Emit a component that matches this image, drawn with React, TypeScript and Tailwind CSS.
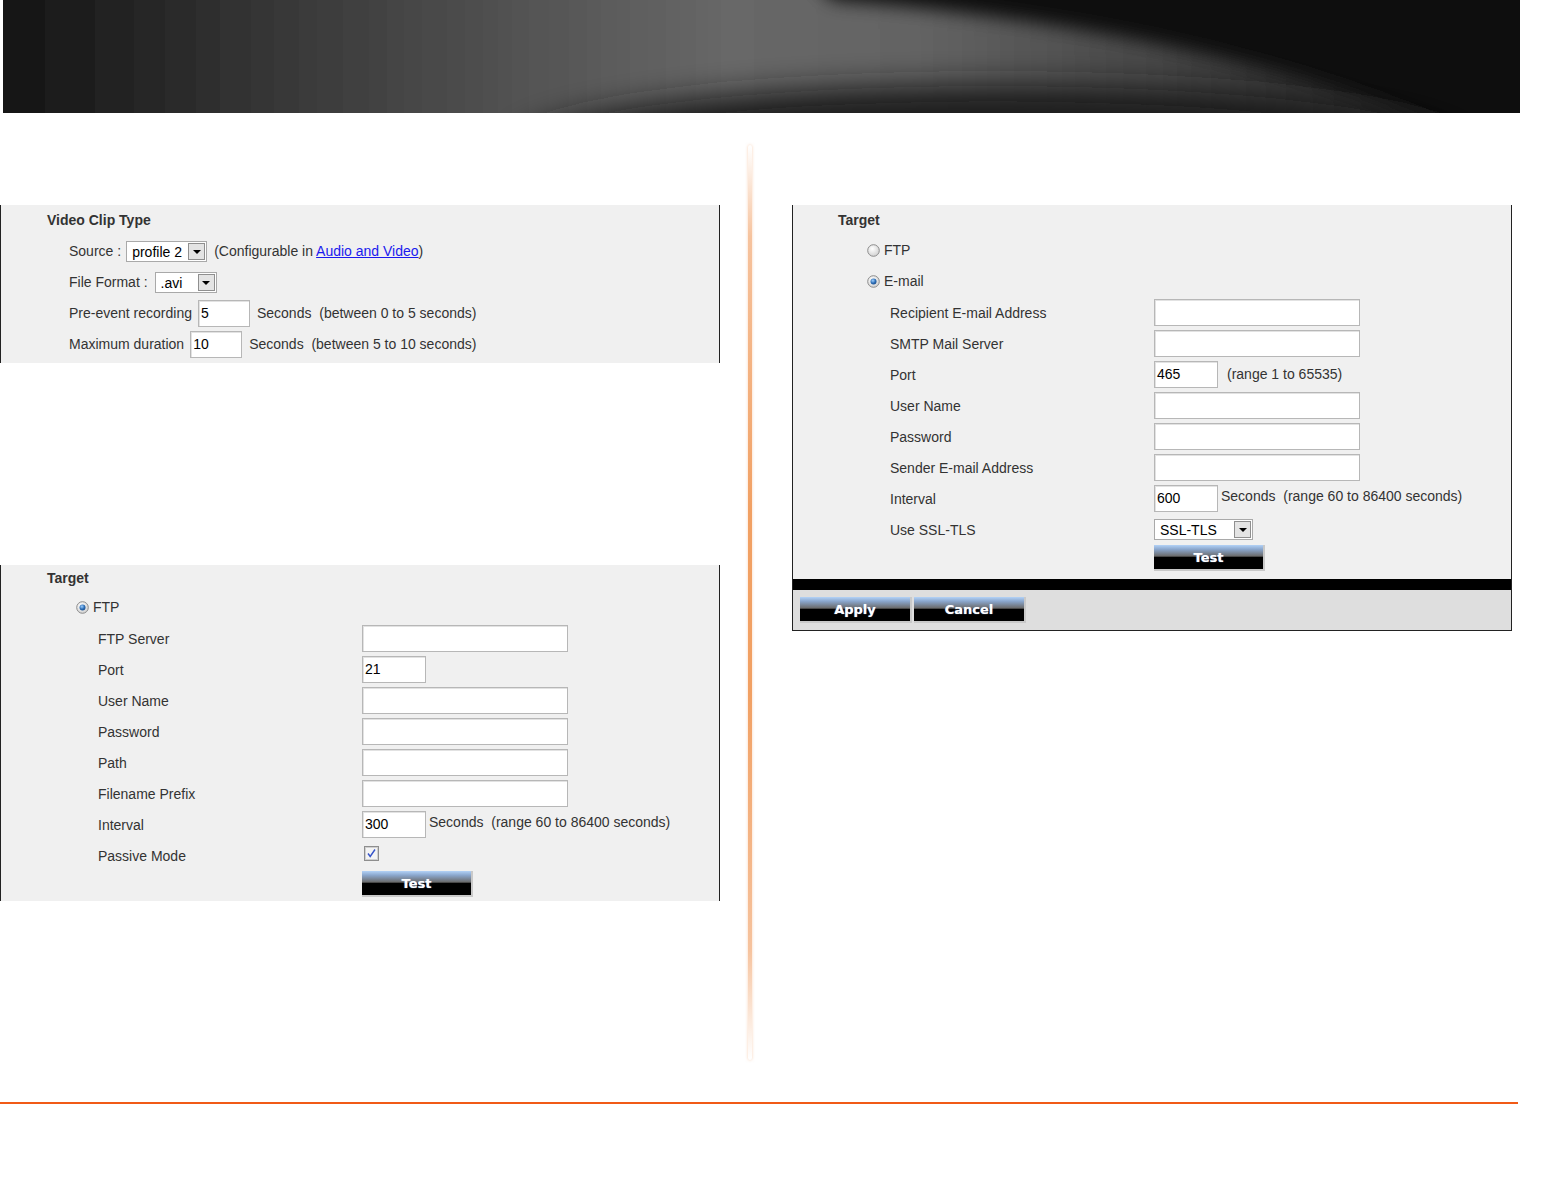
import React from "react";

const F = "font-['Liberation_Sans',Arial,Helvetica,sans-serif]";

function Box({ w, value }: { w: string; value?: string }) {
  return (
    <div
      className={`${w} h-[27px] bg-white border border-[#b7b7b7] shadow-[inset_1px_1px_0_#e2e2e2] text-[14px] text-black leading-[25px] pl-[2px]`}
    >
      {value}
    </div>
  );
}

function Select({ w, value, cls = "" }: { w: string; value: string; cls?: string }) {
  return (
    <div className={`${w} h-[21px] bg-white border border-[#a9a9a9] flex items-center justify-between ${cls}`}>
      <span className="pl-[5px] text-[14px] text-black leading-none">{value}</span>
      <div className="w-[17px] h-[17px] mr-[1px] bg-[#e4e4e4] border border-[#8f8f8f] flex items-center justify-center">
        <div className="w-0 h-0 border-l-[4px] border-r-[4px] border-t-[4px] border-l-transparent border-r-transparent border-t-black mt-[1px]" />
      </div>
    </div>
  );
}

function Btn({ label, w }: { label: string; w: string }) {
  return (
    <div
      className={`${w} h-[26px] flex items-center justify-center pt-[2px] text-white font-bold text-[13px] font-['DejaVu_Sans',Verdana,sans-serif] bg-[linear-gradient(to_bottom,#b3d2f7_0%,#8aa6cc_18%,#6b6b6b_46%,#000_52%,#000_100%)] border-r-2 border-b-2 border-[#c9c9c9] [text-shadow:0_0_1px_#9bb8e8]`}
    >
      {label}
    </div>
  );
}

function Radio({ on }: { on: boolean }) {
  return (
    <svg width="13" height="13" viewBox="0 0 13 13" className="block">
      <defs>
        <radialGradient id={on ? "rgOn" : "rgOff"} cx="0.4" cy="0.35" r="0.7">
          <stop offset="0" stopColor="#ffffff" />
          <stop offset="1" stopColor="#cfcfcf" />
        </radialGradient>
        <radialGradient id="dot" cx="0.4" cy="0.35" r="0.7">
          <stop offset="0" stopColor="#9fd0ff" />
          <stop offset="0.6" stopColor="#2c6db5" />
          <stop offset="1" stopColor="#1a4c8a" />
        </radialGradient>
      </defs>
      <circle cx="6.5" cy="6.5" r="5.8" fill={on ? "url(#rgOn)" : "url(#rgOff)"} stroke="#8c8c8c" strokeWidth="1" />
      {on && <circle cx="6.5" cy="6.5" r="3" fill="url(#dot)" />}
    </svg>
  );
}

function Check() {
  return (
    <svg width="15" height="15" viewBox="0 0 15 15" className="block">
      <rect x="0.5" y="0.5" width="14" height="14" fill="#e9e9e9" stroke="#8e8e8e" />
      <rect x="1.5" y="1.5" width="12" height="12" fill="#f4f4f4" stroke="#d0d0d0" />
      <path d="M4 7.5 L6.2 10.5 L11 3.5" fill="none" stroke="#3553c9" strokeWidth="1.4" />
    </svg>
  );
}

function Row({ label, children }: { label: string; children: React.ReactNode }) {
  return (
    <div className="h-[31px] flex items-center">
      <div className="w-[361px] pl-[97px] pt-[2px] shrink-0">{label}</div>
      <div className="flex items-center">{children}</div>
    </div>
  );
}

function Header() {
  return (
    <svg width="1517" height="113" viewBox="0 0 1517 113" className="block">
      <defs>
        <filter id="b1" x="-20%" y="-80%" width="140%" height="260%">
          <feGaussianBlur stdDeviation="9" />
        </filter>
        <filter id="b2" x="-30%" y="-100%" width="160%" height="300%">
          <feGaussianBlur stdDeviation="16" />
        </filter>
        <linearGradient id="lg" x1="0" x2="1" y1="0" y2="0">
          <stop offset="0" stopColor="#0e0e0e" />
          <stop offset="0.08" stopColor="#1c1c1c" />
          <stop offset="0.22" stopColor="#383838" />
          <stop offset="0.36" stopColor="#515151" />
          <stop offset="0.5" stopColor="#676767" />
          <stop offset="0.62" stopColor="#646464" />
          <stop offset="0.78" stopColor="#464646" />
          <stop offset="0.92" stopColor="#262626" />
          <stop offset="1" stopColor="#161616" />
        </linearGradient>
      </defs>
      <rect width="1517" height="113" fill="#0e0e0e" />
      <path d="M -60 -40 L 790 -40 L 830 0 Q 1230 30 1500 150 L -60 150 Z" fill="url(#lg)" filter="url(#b1)" />
      <ellipse cx="990" cy="152" rx="480" ry="66" fill="#1c1c1c" filter="url(#b2)" />
    </svg>
  );
}

export default function App() {
  return (
    <div className={`w-[1548px] h-[1200px] bg-white ${F} text-[14px] text-[#333]`}>
      <div className="ml-[3px]">
        <Header />
      </div>
      <div className="flex h-[947px]">
        {/* left column */}
        <div className="w-[720px] pt-[92px] flex flex-col gap-[202px]">
          <div className="w-[720px] bg-[#f0f0f0] border-l border-r border-[#222] pb-[3px]">
            <div className="h-[31px] flex items-center pl-[46px] font-bold">Video Clip Type</div>
            <div className="h-[31px] flex items-center pl-[68px]">
              <span>Source :</span>
              <Select w="w-[81px]" value="profile 2" cls="ml-[5px]" />
              <span className="ml-[7px]">
                (Configurable in <span className="text-[#1a1aee] underline">Audio and Video</span>)
              </span>
            </div>
            <div className="h-[31px] flex items-center pl-[68px]">
              <span>File Format :</span>
              <Select w="w-[62px]" value=".avi" cls="ml-[7px]" />
            </div>
            <div className="h-[31px] flex items-center pl-[68px]">
              <span>Pre-event recording</span>
              <div className="ml-[6px]">
                <Box w="w-[52px]" value="5" />
              </div>
              <span className="ml-[7px] whitespace-pre">Seconds  (between 0 to 5 seconds)</span>
            </div>
            <div className="h-[31px] flex items-center pl-[68px]">
              <span>Maximum duration</span>
              <div className="ml-[6px]">
                <Box w="w-[52px]" value="10" />
              </div>
              <span className="ml-[7px] whitespace-pre">Seconds  (between 5 to 10 seconds)</span>
            </div>
          </div>

          <div className="w-[720px] bg-[#f0f0f0] border-l border-r border-[#222] pb-[4px]">
            <div className="h-[26px] flex items-center pl-[46px] font-bold">Target</div>
            <div className="h-[32px] flex items-center pl-[75px] gap-[4px]">
              <Radio on />
              <span>FTP</span>
            </div>
            <Row label="FTP Server">
              <Box w="w-[206px]" />
            </Row>
            <Row label="Port">
              <Box w="w-[64px]" value="21" />
            </Row>
            <Row label="User Name">
              <Box w="w-[206px]" />
            </Row>
            <Row label="Password">
              <Box w="w-[206px]" />
            </Row>
            <Row label="Path">
              <Box w="w-[206px]" />
            </Row>
            <Row label="Filename Prefix">
              <Box w="w-[206px]" />
            </Row>
            <Row label="Interval">
              <Box w="w-[64px]" value="300" />
              <span className="ml-[3px] mb-[4px] whitespace-pre">Seconds  (range 60 to 86400 seconds)</span>
            </Row>
            <Row label="Passive Mode">
              <div className="ml-[2px] mb-[4px]">
                <Check />
              </div>
            </Row>
            <div className="pl-[361px]">
              <Btn label="Test" w="w-[111px]" />
            </div>
          </div>
        </div>

        {/* divider */}
        <div className="w-[72px] pl-[28px]">
          <div className="mt-[32px] h-[915px] w-[4px] rounded-full bg-[linear-gradient(to_bottom,rgba(243,163,109,0)_0%,#f6c39e_10%,#f1a063_40%,#f1a063_60%,#f6c39e_88%,rgba(243,163,109,0)_100%)] shadow-[0_0_3px_rgba(243,163,109,0.5)]" />
        </div>

        {/* right column */}
        <div className="w-[720px] pt-[92px]">
          <div className="w-[720px] bg-[#f0f0f0] border-l border-r border-b border-[#222]">
            <div className="h-[30px] flex items-center pl-[45px] font-bold">Target</div>
            <div className="h-[31px] flex items-center pl-[74px] gap-[4px]">
              <Radio on={false} />
              <span>FTP</span>
            </div>
            <div className="h-[31px] flex items-center pl-[74px] gap-[4px]">
              <Radio on />
              <span>E-mail</span>
            </div>
            <Row label="Recipient E-mail Address">
              <Box w="w-[206px]" />
            </Row>
            <Row label="SMTP Mail Server">
              <Box w="w-[206px]" />
            </Row>
            <Row label="Port">
              <Box w="w-[64px]" value="465" />
              <span className="ml-[9px]">(range 1 to 65535)</span>
            </Row>
            <Row label="User Name">
              <Box w="w-[206px]" />
            </Row>
            <Row label="Password">
              <Box w="w-[206px]" />
            </Row>
            <Row label="Sender E-mail Address">
              <Box w="w-[206px]" />
            </Row>
            <Row label="Interval">
              <Box w="w-[64px]" value="600" />
              <span className="ml-[3px] mb-[4px] whitespace-pre">Seconds  (range 60 to 86400 seconds)</span>
            </Row>
            <Row label="Use SSL-TLS">
              <Select w="w-[99px]" value="SSL-TLS" />
            </Row>
            <div className="pl-[361px]">
              <Btn label="Test" w="w-[111px]" />
            </div>
            <div className="mt-[8px] h-[11px] bg-black" />
            <div className="h-[40px] bg-[#dedede] flex items-start pt-[7px] pl-[7px] gap-[2px]">
              <Btn label="Apply" w="w-[112px]" />
              <Btn label="Cancel" w="w-[112px]" />
            </div>
          </div>
        </div>
      </div>
      <div className="mt-[42px] h-[2px] w-[1518px] bg-[#f15a16]" />
    </div>
  );
}
